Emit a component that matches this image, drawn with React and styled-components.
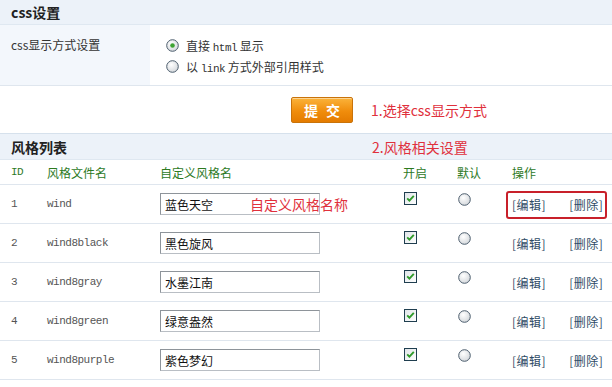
import React from 'react';
import styled, { createGlobalStyle } from 'styled-components';

const GlobalStyle = createGlobalStyle`
  html, body {
    margin: 0;
    padding: 0;
    background: #fff;
  }
  body {
    font-family: "Noto Sans CJK SC", "Liberation Sans", sans-serif;
    font-size: 12px;
    color: #333;
  }
`;

const Page = styled.div`
  width: 612px;
  height: 387px;
  overflow: hidden;
  background: #fff;
`;

const Band = styled.div`
  display: grid;
  grid-template-columns: ${p => (p.$note ? '372px 1fr' : '1fr')};
  align-items: center;
  height: ${p => p.$h}px;
  padding-left: 11px;
  background: #ecf2f9;
  border-top: ${p => (p.$top ? '1px solid #d6e1ec' : 'none')};
  border-bottom: 1px solid #dfe8f1;
  box-sizing: border-box;
`;

const BandTitle = styled.h2`
  margin: 0;
  font-size: 14px;
  font-weight: bold;
  color: #222;
  line-height: 1;
`;

const Note = styled.span`
  font-size: 14px;
  color: #e0303c;
  line-height: 1;
  white-space: nowrap;
`;

const BandNote = styled(Note)`
  margin-left: -11px;
`;

const FormRow = styled.div`
  display: grid;
  grid-template-columns: 150px 1fr;
  height: 61px;
  border-bottom: 1px solid #dfe6ee;
  box-sizing: border-box;
`;

const Label = styled.div`
  background: #f3f7fc;
  padding: 11px 0 0 11px;
  color: #333;
`;

const Options = styled.div`
  display: flex;
  flex-direction: column;
  gap: 5px;
  padding: 12px 0 0 16px;
`;

const Option = styled.label`
  display: flex;
  align-items: center;
  gap: 7px;
  height: 16px;
  color: #333;
`;

const Latin = styled.span`
  font-family: "Liberation Mono", "DejaVu Sans Mono", monospace;
  font-size: 11px;
  letter-spacing: -0.5px;
  color: ${p => p.$c || 'inherit'};
`;

const SubmitRow = styled.div`
  display: flex;
  align-items: center;
  height: 47px;
  padding-left: 291px;
  gap: 18px;
`;

const SubmitButton = styled.button`
  width: 62px;
  height: 26px;
  padding: 0;
  border: 1px solid #c9730a;
  border-radius: 2px;
  background: linear-gradient(#fbb33a, #f08d0c 55%, #e47b00);
  box-shadow: inset 0 1px 0 rgba(255, 255, 255, 0.45);
  color: #fff;
  font-family: "Noto Sans CJK SC", sans-serif;
  font-size: 14px;
  font-weight: bold;
  letter-spacing: 8px;
  text-indent: 8px;
  cursor: pointer;
`;

const cols = '36px 113px 243px 54px 55px 1fr';

const HeadRow = styled.div`
  display: grid;
  grid-template-columns: ${cols};
  align-items: center;
  height: 25px;
  padding-left: 11px;
  border-bottom: 1px solid #dfe6ee;
  box-sizing: border-box;
  color: #2d7a1f;
`;

const Row = styled.div`
  display: grid;
  grid-template-columns: ${cols};
  align-items: center;
  height: 39px;
  padding-left: 11px;
  border-bottom: 1px solid #dfe6ee;
  box-sizing: border-box;
  color: #444;
`;

const NameCell = styled.div`
  position: relative;
  display: flex;
  align-items: center;
`;

const NameInput = styled.input`
  width: 160px;
  height: 22px;
  box-sizing: border-box;
  padding: 0 4px;
  border: 1px solid #b9bec4;
  border-top-color: #8e949a;
  border-left-color: #8e949a;
  font-family: "Noto Sans CJK SC", sans-serif;
  font-size: 12px;
  color: #111;
  background: #fff;
  outline: none;
`;

const InputNote = styled(Note)`
  position: absolute;
  left: 90px;
  top: 50%;
  transform: translateY(-50%);
`;

const BoxCell = styled.div`
  display: flex;
  align-self: start;
  padding-top: ${p => p.$top}px;
  padding-left: ${p => p.$left}px;
`;

const Actions = styled.div`
  position: relative;
  display: flex;
  align-items: center;
  gap: 23px;
  height: 17px;
`;

const Link = styled.a`
  color: #2f4c66;
  text-decoration: none;
  cursor: pointer;
  letter-spacing: 0.5px;
`;

const Highlight = styled.span`
  position: absolute;
  left: -6px;
  top: -5px;
  width: 101px;
  height: 28px;
  border: 2px solid #c8202a;
  border-radius: 3px;
  box-sizing: border-box;
  pointer-events: none;
`;

function Radio({ checked }) {
  return (
    <svg width="13" height="13" viewBox="0 0 13 13">
      <defs>
        <radialGradient id="rg" cx="40%" cy="35%" r="70%">
          <stop offset="0%" stopColor="#ffffff" />
          <stop offset="100%" stopColor="#d2d6da" />
        </radialGradient>
      </defs>
      <circle cx="6.5" cy="6.5" r="5.8" fill="url(#rg)" stroke="#4d5e6e" strokeWidth="1" />
      {checked && <circle cx="6.5" cy="6.5" r="2.3" fill="#3ea333" />}
    </svg>
  );
}

function Checkbox() {
  return (
    <svg width="13" height="13" viewBox="0 0 13 13">
      <defs>
        <linearGradient id="cg" x1="0" y1="0" x2="1" y2="1">
          <stop offset="0%" stopColor="#dfe4e8" />
          <stop offset="100%" stopColor="#ffffff" />
        </linearGradient>
      </defs>
      <rect x="0.5" y="0.5" width="12" height="12" fill="url(#cg)" stroke="#1f3e4f" />
      <path d="M3.2 6.4 L5.4 8.6 L9.8 3.9" fill="none" stroke="#2f9a2a" strokeWidth="1.9" />
    </svg>
  );
}

const styles = [
  { id: 1, file: 'wind', name: '蓝色天空', note: true },
  { id: 2, file: 'wind8black', name: '黑色旋风' },
  { id: 3, file: 'wind8gray', name: '水墨江南' },
  { id: 4, file: 'wind8green', name: '绿意盎然' },
  { id: 5, file: 'wind8purple', name: '紫色梦幻' },
];

export default function App() {
  return (
    <Page>
      <GlobalStyle />
      <Band $h={25}>
        <BandTitle>css设置</BandTitle>
      </Band>
      <FormRow>
        <Label>css显示方式设置</Label>
        <Options>
          <Option>
            <Radio checked />
            <span>直接 <Latin>html</Latin> 显示</span>
          </Option>
          <Option>
            <Radio />
            <span>以 <Latin>link</Latin> 方式外部引用样式</span>
          </Option>
        </Options>
      </FormRow>
      <SubmitRow>
        <SubmitButton>提交</SubmitButton>
        <Note>1.选择css显示方式</Note>
      </SubmitRow>
      <Band $h={27} $top $note>
        <BandTitle>风格列表</BandTitle>
        <BandNote>2.风格相关设置</BandNote>
      </Band>
      <HeadRow>
        <Latin>ID</Latin>
        <span>风格文件名</span>
        <span>自定义风格名</span>
        <span>开启</span>
        <span>默认</span>
        <span>操作</span>
      </HeadRow>
      {styles.map(s => (
        <Row key={s.id}>
          <Latin $c="#555">{s.id}</Latin>
          <Latin $c="#555">{s.file}</Latin>
          <NameCell>
            <NameInput defaultValue={s.name} />
            {s.note && <InputNote>自定义风格名称</InputNote>}
          </NameCell>
          <BoxCell $top={7} $left={1}>
            <Checkbox />
          </BoxCell>
          <BoxCell $top={8} $left={1}>
            <Radio />
          </BoxCell>
          <Actions>
            <Link>[编辑]</Link>
            <Link>[删除]</Link>
            {s.note && <Highlight />}
          </Actions>
        </Row>
      ))}
    </Page>
  );
}
